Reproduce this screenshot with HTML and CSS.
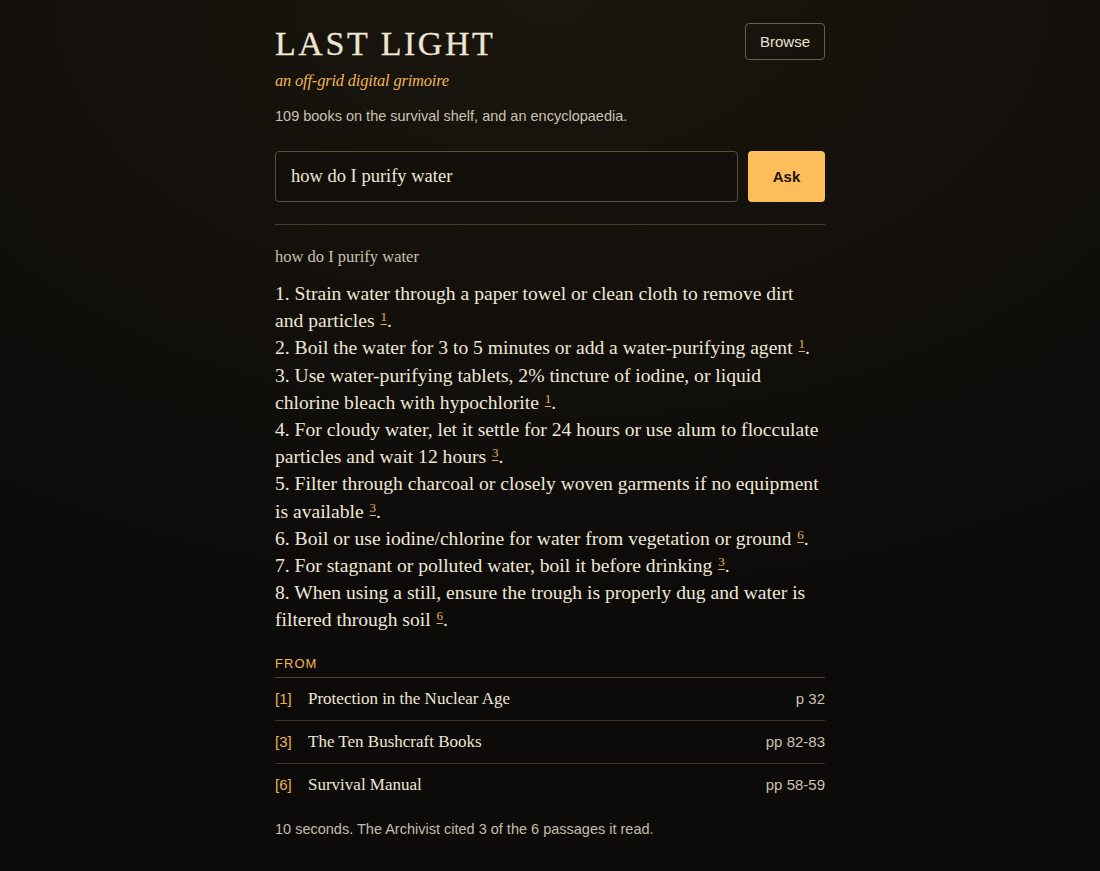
FILE: index.html
```html
<!DOCTYPE html>
<html lang="en">
<head>
<meta charset="utf-8">
<title>Last Light</title>
<link rel="stylesheet" href="styles.css">
</head>
<body>
<main class="page">
  <header class="header">
    <div class="brand">
      <h1 class="title">LAST LIGHT</h1>
      <p class="tagline">an off-grid digital grimoire</p>
      <p class="intro">109 books on the survival shelf, and an encyclopaedia.</p>
    </div>
    <button class="browse" type="button">Browse</button>
  </header>

  <form class="ask-form" onsubmit="return false;">
    <input class="query" type="text" value="how do I purify water">
    <button class="ask" type="submit">Ask</button>
  </form>

  <hr class="rule">

  <section class="result">
    <p class="echo">how do I purify water</p>
    <div class="answer">
      <p>1. Strain water through a paper towel or clean cloth to remove dirt and particles <a class="cite">1</a>.</p>
      <p>2. Boil the water for 3 to 5 minutes or add a water-purifying agent <a class="cite">1</a>.</p>
      <p>3. Use water-purifying tablets, 2% tincture of iodine, or liquid chlorine bleach with hypochlorite <a class="cite">1</a>.</p>
      <p>4. For cloudy water, let it settle for 24 hours or use alum to flocculate particles and wait 12 hours <a class="cite">3</a>.</p>
      <p>5. Filter through charcoal or closely woven garments if no equipment is available <a class="cite">3</a>.</p>
      <p>6. Boil or use iodine/chlorine for water from vegetation or ground <a class="cite">6</a>.</p>
      <p>7. For stagnant or polluted water, boil it before drinking <a class="cite">3</a>.</p>
      <p>8. When using a still, ensure the trough is properly dug and water is filtered through soil <a class="cite">6</a>.</p>
    </div>

    <h2 class="from">FROM</h2>
    <ul class="sources">
      <li class="source"><span class="num">[1]</span><span class="book">Protection in the Nuclear Age</span><span class="pages">p 32</span></li>
      <li class="source"><span class="num">[3]</span><span class="book">The Ten Bushcraft Books</span><span class="pages">pp 82-83</span></li>
      <li class="source"><span class="num">[6]</span><span class="book">Survival Manual</span><span class="pages">pp 58-59</span></li>
    </ul>

    <p class="footnote">10 seconds. The Archivist cited 3 of the 6 passages it read.</p>
  </section>
</main>
</body>
</html>
```

FILE: styles.css
```css
html, body {
  margin: 0;
  padding: 0;
}

body {
  min-height: 100vh;
  background: radial-gradient(ellipse 90% 70% at 50% 0%, #1a150e 0%, #14110c 45%, #0c0b0a 100%);
  background-color: #0c0b0a;
  color: #ece3d2;
  font-family: "Liberation Serif", "DejaVu Serif", serif;
}

.page {
  width: 550px;
  margin: 0 auto;
  padding-top: 23px;
  padding-bottom: 20px;
}

.header {
  display: flex;
  justify-content: space-between;
  align-items: flex-start;
}

.title {
  margin: 0;
  font-size: 34px;
  line-height: 41px;
  font-weight: 400;
  letter-spacing: 0.075em;
  color: #efe6d4;
  -webkit-text-stroke: 0.3px #efe6d4;
}

.tagline {
  margin: 5px 0 0;
  font-size: 16.5px;
  line-height: 24px;
  font-style: italic;
  letter-spacing: -0.2px;
  color: #f0b555;
}

.intro {
  margin: 12px 0 0;
  font-family: "Liberation Sans", Arial, sans-serif;
  font-size: 14.5px;
  line-height: 22px;
  color: #cbc2b2;
}

.browse {
  width: 80px;
  height: 37px;
  padding: 0;
  background: transparent;
  border: 1px solid #6a5e4a;
  border-radius: 4px;
  color: #ece3d2;
  font-family: "Liberation Sans", Arial, sans-serif;
  font-size: 15px;
}

.ask-form {
  display: flex;
  gap: 10px;
  margin-top: 24px;
}

.query {
  flex: 1;
  height: 51px;
  box-sizing: border-box;
  margin: 0;
  padding: 0 15px;
  background: #120f0b;
  border: 1px solid #5b4e3b;
  border-radius: 4px;
  color: #efe6d4;
  font-family: "Liberation Serif", "DejaVu Serif", serif;
  font-size: 18.5px;
  outline: none;
}

.ask {
  width: 77px;
  height: 51px;
  padding: 0;
  border: none;
  border-radius: 4px;
  background: #fdbd5b;
  color: #1c1409;
  font-family: "Liberation Sans", Arial, sans-serif;
  font-size: 15px;
  font-weight: 700;
}

.rule {
  margin: 22px 0 0;
  border: 0;
  border-top: 1px solid #4a3f2f;
  height: 0;
}

.echo {
  margin: 20px 0 0;
  font-size: 16.5px;
  line-height: 24px;
  color: #c9c0af;
}

.answer {
  width: 547px;
  margin-top: 11px;
  font-size: 19.6px;
  line-height: 27.2px;
  color: #efe6d4;
}

.answer p {
  margin: 0;
}

.cite {
  position: relative;
  top: -6px;
  font-size: 13px;
  line-height: 1;
  color: #eab152;
  text-decoration: underline;
  text-underline-offset: 3px;
  margin-left: 1px;
}

.from {
  margin: 21px 0 0;
  font-family: "Liberation Sans", Arial, sans-serif;
  font-size: 13px;
  line-height: 18px;
  font-weight: 500;
  letter-spacing: 0.08em;
  color: #f0b555;
}

.sources {
  list-style: none;
  margin: 4px 0 0;
  padding: 0;
  border-top: 1px solid #4e4331;
}

.source {
  display: flex;
  align-items: center;
  height: 42px;
  border-bottom: 1px solid #3f3628;
}

.source:last-child {
  border-bottom: none;
}

.num {
  width: 33px;
  font-family: "Liberation Sans", Arial, sans-serif;
  font-size: 15px;
  color: #eab152;
}

.book {
  flex: 1;
  font-size: 17px;
  color: #efe6d4;
}

.pages {
  font-family: "Liberation Sans", Arial, sans-serif;
  font-size: 15px;
  color: #cbc2b2;
}

.footnote {
  margin: 13px 0 0;
  font-family: "Liberation Sans", Arial, sans-serif;
  font-size: 14.5px;
  line-height: 20px;
  color: #c4bbab;
}
```
